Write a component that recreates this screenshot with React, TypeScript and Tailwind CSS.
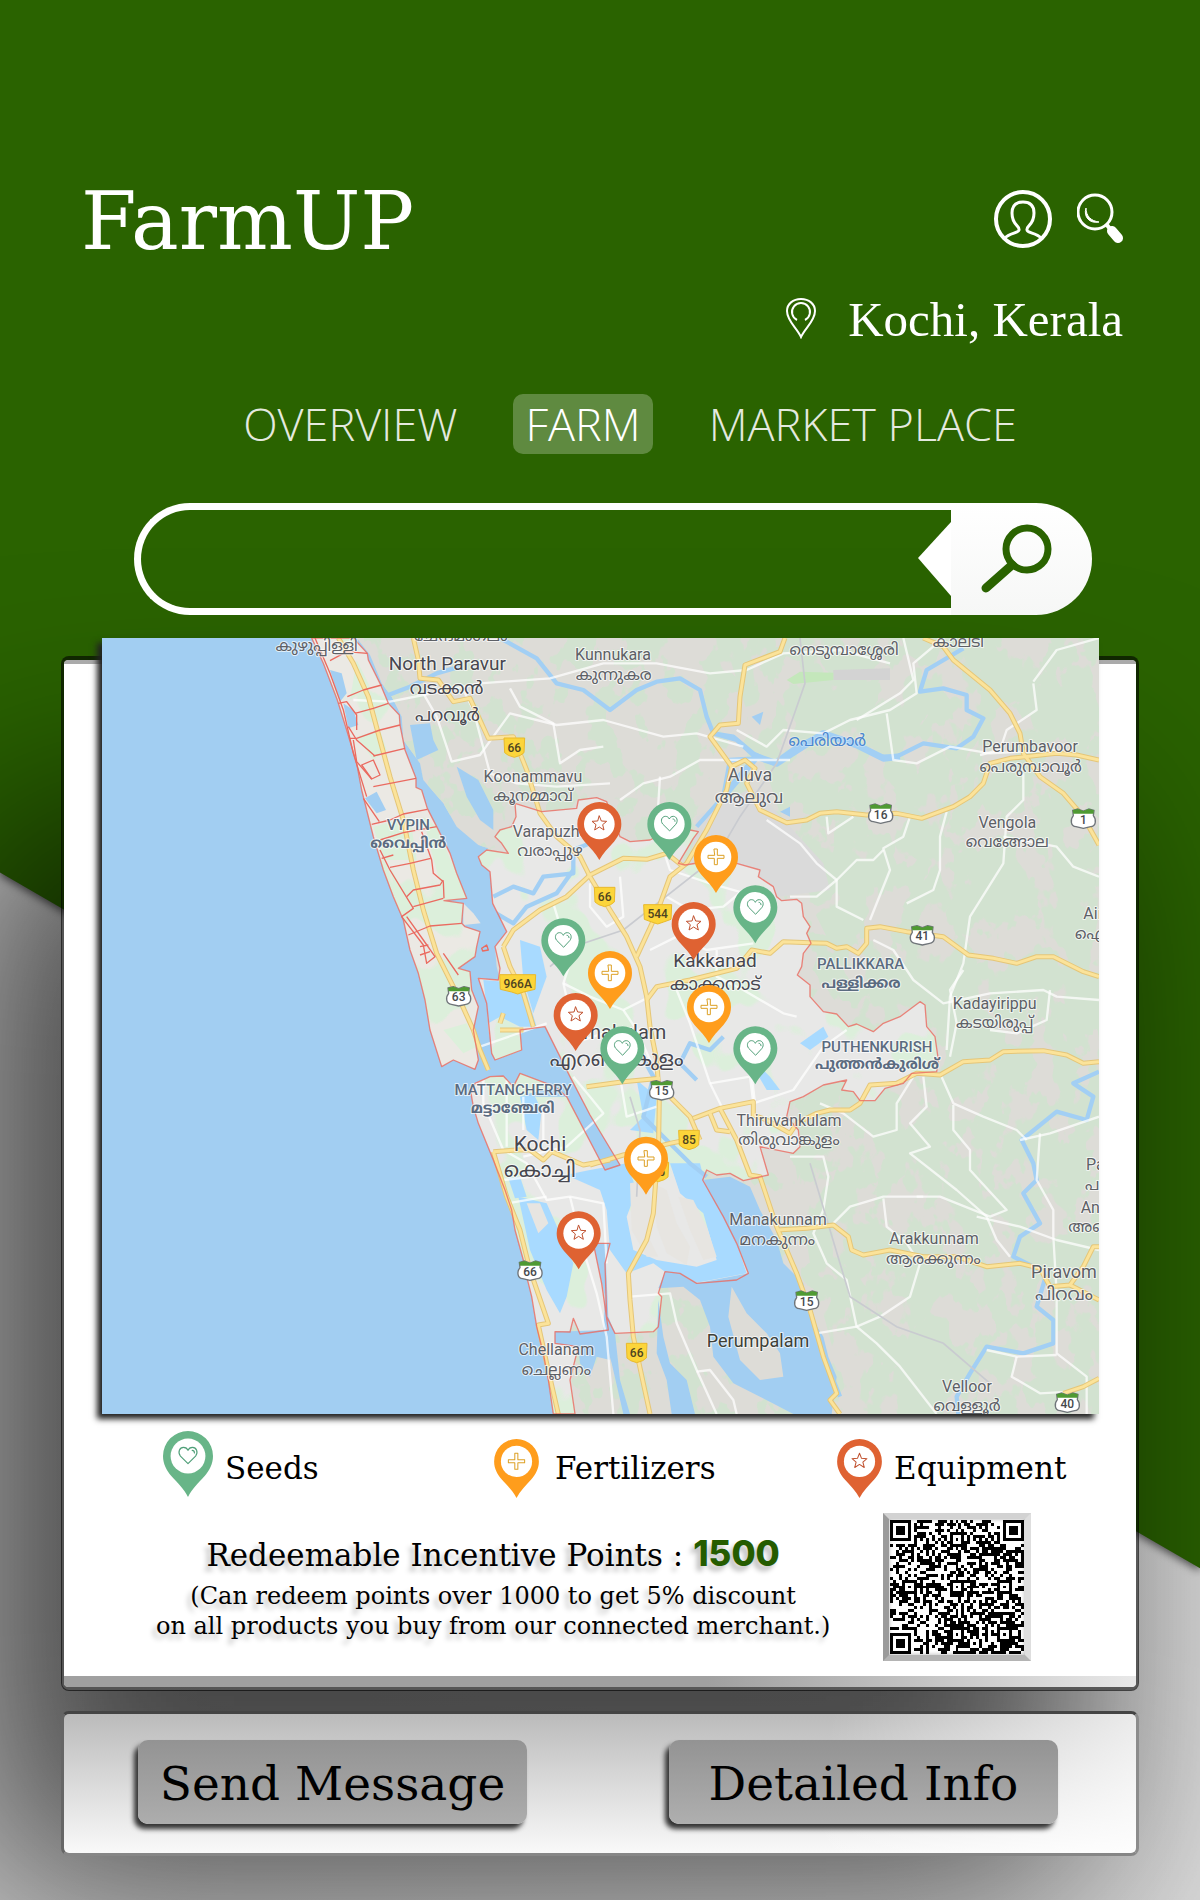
import React from "react";

const SERIF = "font-['DejaVu_Serif',serif]";

type PinKind = "seed" | "fertilizer" | "equipment";

const PIN_COLORS: Record<PinKind, { fill: string; line: string }> = {
  seed: { fill: "#68b588", line: "#4f9f78" },
  fertilizer: { fill: "#ff9d1c", line: "#dda126" },
  equipment: { fill: "#df6232", line: "#c0512f" },
};

/* Marker with its head centred on 66,66 and its tip at 66,172. */
function PinShape({ kind }: { kind: PinKind }) {
  const c = PIN_COLORS[kind];
  return (
    <g>
      <path d="M66 0A66 66 0 0 0 0 66C0 88 10 104 22 119C40 139 55 153 66 174C77 153 92 139 110 119C122 104 132 88 132 66A66 66 0 0 0 66 0Z" fill={c.fill} />
      <circle cx="66" cy="66" r="46" fill="#fff" />
      <g fill="none" stroke={c.line} strokeWidth="3" strokeLinejoin="round" strokeLinecap="round">
        {kind === "seed" && (
          <>
            <path d="M66 86L46 66C38 56 44 43 54 43C60 43 64 46 66 51C68 46 72 43 78 43C88 43 94 56 86 66Z" />
            <path d="M77 51C81 51 83 54 83 58" />
          </>
        )}
        {kind === "fertilizer" && <path d="M61 42H70V61H90V70H70V89H61V70H42V61H61Z" />}
        {kind === "equipment" && <path d="M66 42L72 57L88 58L76 68L80 84L66 75L52 84L56 68L44 58L60 57Z" />}
      </g>
    </g>
  );
}

function Pin({ kind, className }: { kind: PinKind; className: string }) {
  return (
    <svg viewBox="0 0 132 174" className={className} aria-hidden="true">
      <PinShape kind={kind} />
    </svg>
  );
}

const PINS: [PinKind, number, number][] = [
  ["equipment", 1528, 582],
  ["seed", 1738, 582],
  ["fertilizer", 1878, 681],
  ["seed", 1996, 832],
  ["equipment", 1811, 882],
  ["seed", 1420, 931],
  ["fertilizer", 1560, 1029],
  ["fertilizer", 1857, 1131],
  ["equipment", 1457, 1155],
  ["seed", 1597, 1255],
  ["seed", 1996, 1255],
  ["fertilizer", 1668, 1586],
  ["equipment", 1466, 1810],
];

type Label = { t: string; x: number; y: number; s?: number; c?: string; w?: number; a?: "start" | "end" };

const SLATE = "#5b6b80";
const DARK = "#47474f";

const LABELS: Label[] = [
  { t: "കുഴുപ്പിള്ളി", x: 680, y: 62 },
  { t: "ചേന്ദമംഗലം", x: 1112, y: 32 },
  { t: "North Paravur", x: 1072, y: 121, s: 57, c: DARK },
  { t: "വടക്കൻ", x: 1070, y: 192, s: 54, c: DARK },
  { t: "പറവൂർ", x: 1072, y: 273, s: 54, c: DARK },
  { t: "Kunnukara", x: 1569, y: 89 },
  { t: "കുന്നുകര", x: 1571, y: 149 },
  { t: "നെടുമ്പാശ്ശേരി", x: 2262, y: 74 },
  { t: "കാലടി", x: 2605, y: 50 },
  { t: "Perumbavoor", x: 2820, y: 366 },
  { t: "പെരുമ്പാവൂർ", x: 2822, y: 425 },
  { t: "Aluva", x: 1980, y: 453, s: 54 },
  { t: "ആലുവ", x: 1977, y: 518, s: 54 },
  { t: "Koonammavu", x: 1329, y: 456 },
  { t: "കൂനമ്മാവ്", x: 1329, y: 514 },
  { t: "Varapuzha", x: 1268, y: 620, a: "start" },
  { t: "വരാപ്പുഴ", x: 1380, y: 679 },
  { t: "VYPIN", x: 955, y: 600, s: 45, c: SLATE, w: 500 },
  { t: "വൈപ്പിൻ", x: 955, y: 655, s: 45, c: SLATE, w: 700 },
  { t: "Vengola", x: 2752, y: 595 },
  { t: "വെങ്ങോല", x: 2752, y: 652 },
  { t: "PALLIKKARA", x: 2312, y: 1018, s: 45, c: SLATE, w: 500 },
  { t: "പള്ളിക്കര", x: 2313, y: 1074, s: 45, c: SLATE, w: 700 },
  { t: "Kakkanad", x: 1875, y: 1011, s: 57, c: DARK },
  { t: "കാക്കനാട്", x: 1876, y: 1080, s: 54, c: DARK },
  { t: "Kadayirippu", x: 2714, y: 1136 },
  { t: "കടയിരുപ്പ്", x: 2714, y: 1195 },
  { t: "Airapuram", x: 2980, y: 868, a: "start" },
  { t: "ഐരാപുരം", x: 2955, y: 928, a: "start" },
  { t: "Ernakulam", x: 1729, y: 1228, s: 60, c: DARK, a: "end" },
  { t: "എറണാകുളം", x: 1580, y: 1309, s: 63, c: DARK },
  { t: "MATTANCHERRY", x: 1269, y: 1396, s: 45, c: SLATE, w: 500 },
  { t: "മട്ടാഞ്ചേരി", x: 1268, y: 1450, s: 45, c: SLATE, w: 700 },
  { t: "Kochi", x: 1350, y: 1562, s: 63, c: DARK },
  { t: "കൊച്ചി", x: 1350, y: 1641, s: 63, c: DARK },
  { t: "Chellanam", x: 1399, y: 2174 },
  { t: "ചെല്ലണം", x: 1399, y: 2234 },
  { t: "PUTHENKURISH", x: 2361, y: 1265, s: 45, c: SLATE, w: 500 },
  { t: "പുത്തൻകുരിശ്", x: 2361, y: 1318, s: 45, c: SLATE, w: 700 },
  { t: "Thiruvankulam", x: 2097, y: 1487 },
  { t: "തിരുവാങ്കുളം", x: 2097, y: 1545 },
  { t: "Manakunnam", x: 2064, y: 1786 },
  { t: "മനകുന്നം", x: 2062, y: 1845 },
  { t: "Arakkunnam", x: 2532, y: 1843 },
  { t: "ആരക്കുന്നം", x: 2530, y: 1902 },
  { t: "Piravom", x: 2922, y: 1944, s: 54 },
  { t: "പിറവം", x: 2922, y: 2009, s: 54 },
  { t: "Pampakuda", x: 2988, y: 1621, a: "start" },
  { t: "പാമ്പാക്കുട", x: 2985, y: 1680, a: "start" },
  { t: "Anchalpetty", x: 2972, y: 1748, a: "start" },
  { t: "അഞ്ചൽപെട്ടി", x: 2935, y: 1806, a: "start" },
  { t: "Perumpalam", x: 2004, y: 2150, s: 54, c: "#3d4038" },
  { t: "Velloor", x: 2631, y: 2287 },
  { t: "വെള്ളൂർ", x: 2631, y: 2342 },
];

const YELLOW_SHIELDS: [string, number, number][] = [
  ["66", 1273, 352],
  ["66", 1544, 800],
  ["544", 1703, 852],
  ["966A", 1283, 1062],
  ["85", 1797, 1529],
  ["85", 1705, 1625],
  ["66", 1640, 2168],
];

const WHITE_SHIELDS: [string, number, number][] = [
  ["63", 1106, 1098],
  ["66", 1320, 1921],
  ["16", 2372, 550],
  ["1", 2980, 565],
  ["41", 2497, 915],
  ["15", 1715, 1380],
  ["15", 2150, 2011],
  ["40", 2932, 2317],
];

const VYPIN =
  "M665 24L700 100L742 210L770 300L800 400L815 480L830 540L850 620L880 720L910 800L940 870L960 960L985 1030L1005 1110L1020 1200L1055 1310L1090 1290L1155 1318L1165 1290L1150 1200L1165 1130L1145 1080L1140 1025L1105 1015L1155 980L1160 950L1170 905L1125 890L1115 880L1120 820L1062 812L1130 805L1100 730L1080 670L1040 590L1012 535L995 480L978 472L978 445L945 360L930 285L928 255L895 220L870 160L835 90L832 70L790 24Z";

const MAINLAND =
  "M800 24L840 75L875 160L905 200L935 260L940 330L990 400L1000 450L1060 520L1100 590L1165 645L1195 655L1165 680L1175 705L1200 725L1208 820L1250 905L1215 950L1220 1010L1230 1050L1165 1045L1190 1120L1195 1200L1215 1290L1295 1260L1290 1200L1365 1190L1440 1340L1500 1455L1590 1605L1560 1635L1450 1610L1420 1570L1370 1520L1330 1440L1300 1400L1240 1338L1200 1340L1155 1360L1143 1390L1150 1430L1165 1480L1210 1590L1245 1680L1265 1740L1275 1800L1300 1890L1310 1940L1325 2000L1340 2090L1360 2170L1375 2250L1390 2352H3027V24Z";

const CITY =
  "M1275 520L1355 545L1460 535L1465 510L1520 503L1550 515L1590 620L1620 635L1680 630L1738 600L1800 600L1825 605L1810 625L1765 700L1785 705L1880 690L1940 700L2010 720L2005 740L2050 770L2060 800L2075 812L2120 808L2135 820L2140 860L2160 890L2150 910L2163 940L2140 970L2135 1010L2122 1035L2160 1065L2160 1100L2200 1145L2240 1152L2275 1190L2300 1182L2350 1205L2380 1180L2430 1160L2490 1115L2505 1125L2510 1190L2535 1220L2545 1290L2540 1325L2465 1330L2440 1360L2385 1375L2355 1412L2310 1412L2290 1385L2255 1380L2270 1350L2200 1365L2140 1400L2100 1415L2090 1460L2125 1500L2130 1550L2110 1570L2010 1550L2035 1635L1960 1652L1920 1630L1880 1635L1850 1620L1838 1650L1900 1760L1940 1840L1975 1930L1940 1950L1820 1960L1770 1930L1725 1925L1705 1990L1715 2000L1705 2090L1690 2105L1575 2110L1550 2060L1545 1900L1560 1840L1510 1840L1535 1960L1555 2100L1470 2112L1450 2065L1440 2106L1395 2105L1395 2140L1465 2150L1440 2250L1455 2352H1390L1375 2250L1360 2170L1340 2090L1325 2000L1310 1940L1300 1890L1275 1800L1265 1740L1245 1680L1210 1590L1165 1480L1150 1430L1143 1390L1155 1360L1200 1340L1240 1338L1270 1370L1290 1330L1395 1370L1430 1400L1545 1620L1590 1605L1500 1455L1440 1340L1365 1190L1290 1200L1295 1260L1215 1290L1205 1270L1190 1120L1165 1045L1225 1050L1230 1015L1215 950L1250 905L1208 820L1200 725L1175 705L1165 680L1190 660L1255 670L1235 640L1215 620L1230 600L1265 590L1278 560Z";

const OUTER_WATER = [
  "M1838 1650L1920 1640L1980 1670L2010 1740L2060 1830L2080 1900L2140 1960L2150 2040L2200 2120L2215 2180L2240 2240L2225 2352H2110L2010 2300L1930 2260L1870 2180L1860 2090L1830 2010L1780 1970L1705 1975L1725 1925L1770 1930L1820 1960L1975 1930L1940 1840Z",
  "M1705 2010L1720 2120L1740 2200L1790 2250L1815 2352H1745L1730 2250L1700 2170Z",
  "M1510 1840L1560 1840L1548 1900L1555 2060L1575 2110L1590 2250L1620 2352H1600L1565 2200L1540 2110L1545 2000Z",
  "M1395 2105L1550 2100L1560 2190L1520 2180L1500 2240L1470 2200L1465 2150L1395 2140Z",
  "M720 120L755 130L770 190L750 215Z",
  "M760 220L790 240L805 285L775 295Z",
  "M825 505L860 485L888 540L860 550Z",
  "M1100 410L1165 450L1210 540L1210 600L1170 570L1130 500Z",
  "M960 285L1020 280L1030 330L1045 360L980 390Z",
  "M2070 545L2100 530L2100 560Z",
  "M1985 260L2020 245L2010 285Z",
];

const INNER_WATER = [
  "M1500 1620L1610 1600L1640 1680L1610 1760L1630 1860L1700 1890L1820 1910L1880 1890L1840 1750L1770 1690L1740 1600L1830 1600L1845 1660L1900 1760L1940 1840L1970 1930L1820 1958L1770 1930L1725 1925L1690 1900L1610 1930L1560 1860L1550 1740L1530 1680L1440 1640L1400 1640Z",
  "M1285 1700L1370 1720L1410 1810L1450 1900L1430 2000L1410 2050L1370 1980L1320 1860Z",
  "M1255 1645L1290 1640L1310 1700L1275 1705Z",
  "M1290 1400L1330 1390L1355 1440L1345 1530L1310 1500Z",
  "M1180 1050L1300 1060L1340 1190L1290 1190L1230 1160L1195 1180Z",
  "M1290 930L1350 950L1370 1040L1330 1150L1300 1050Z",
  "M1640 1350L1700 1400L1690 1510L1620 1500L1660 1460Z",
  "M1960 1260L2040 1340L2070 1380L2030 1380Z",
  "M2130 1240L2200 1190L2215 1220L2160 1260Z",
];

const ISLANDS = [
  "M1620 1660L1670 1650L1695 1750L1680 1830L1705 1880L1670 1880L1625 1800Z",
  "M1690 1660L1730 1680L1760 1780L1800 1850L1790 1905L1730 1870L1700 1790Z",
  "M1765 1700L1810 1710L1850 1790L1880 1880L1840 1890L1800 1800Z",
  "M1310 1720L1350 1720L1375 1780L1345 1810Z",
  "M1120 820L1150 850L1172 880L1120 885Z",
];

const RIVERS = [
  "M1230 24L1340 85L1400 160L1480 180L1560 240L1640 180L1700 155L1770 145L1830 180L1850 260L1870 310L1930 320L1990 370L2050 400L2120 350L2200 310L2300 340L2370 380L2420 380L2500 340L2600 355L2650 320L2680 265L2630 240L2630 195L2560 175L2490 185L2510 120L2620 55",
  "M1870 310L1940 330L2000 385L1920 390L1900 500L1820 590",
  "M895 195L960 170L1040 130L1110 110",
  "M3027 1325L2950 1360L3010 1400L2990 1470L2900 1445L2795 1530L2830 1600L2840 1650L2800 1690L2850 1780L2790 1820L2770 1880L2870 1930L2840 2030L2890 2070L2890 2140L2800 2170L2690 2150L2640 2230L2600 2300L2605 2352",
  "M1210 800L1270 770L1330 790L1360 740L1450 730L1450 660L1500 640",
  "M1210 845L1270 880L1310 830L1400 790L1450 720",
  "M2170 2110L2210 2200L2250 2300",
  "M1640 1250L1690 1340L1660 1460L1720 1520L1800 1600L1850 1640",
  "M1900 1220L1860 1260L1800 1240L1770 1300L1820 1350",
];

const WHITE_ROADS = [
  "M790 210L900 215L1000 195L1170 160L1380 145L1540 100L1700 100L1860 130L1970 120L2080 70L2250 60L2400 100",
  "M1000 190L1040 260L1085 395L1170 375L1260 250L1400 285L1540 270L1720 320L1820 310L1960 350",
  "M1260 175L1290 230L1390 280L1410 400L1470 360L1540 350",
  "M1110 160L1150 240L1200 430L1280 460L1400 470L1560 460",
  "M1590 510L1660 460L1740 440L1830 390L2100 390",
  "M1710 440L1700 600L1740 720L1860 760L2000 800",
  "M1940 300L2030 350L2080 300L2200 310L2280 270L2400 240L2480 190L2470 100L2560 24",
  "M2390 250L2410 390L2480 400L2580 350L2700 370L2900 360",
  "M2800 430L2800 510L2750 560L2740 700L2640 860L2620 1000L2580 1100L2570 1260",
  "M2830 160L2840 240L2750 300L2730 360L2670 375",
  "M2440 24L2470 150L2430 190L2300 270",
  "M2830 155L2900 60L3027 24",
  "M2210 560L2215 610L2290 560",
  "M2460 560L2440 620L2380 655L2400 720L2340 870",
  "M2570 545L2550 620L2550 720L2530 780L2450 820",
  "M2380 660L2350 690L2300 690L2240 750L2180 800L2100 800",
  "M2030 570L2130 640L2180 700L2240 750L2240 830L2320 870",
  "M2350 930L2410 960L2470 1050L2560 1120L2700 1090L2860 1080L2900 1100L3027 1110",
  "M2620 1020L2580 1080L2600 1180L2580 1280",
  "M2880 1080L2870 1170L2780 1210L2700 1200",
  "M2740 620L2900 650L2950 710L3027 740",
  "M2470 1340L2420 1420L2420 1500L2350 1520L2260 1450L2190 1420",
  "M2550 1330L2590 1420L2680 1460L2780 1500L2810 1530",
  "M2590 1425L2590 1500L2640 1560L2640 1620L2750 1740L2700 1760L2550 1700L2480 1700",
  "M2500 1340L2510 1430L2460 1480L2520 1550L2460 1570L2600 1680L2690 1760L2720 1830L2760 1880",
  "M2790 1530L2880 1510L3027 1460",
  "M2850 1510L2840 1650L2890 1740L2890 1820L2900 1990L2900 2080L2900 2170L2990 2240L2990 2352",
  "M2660 1760L2790 1790L2900 1830L3027 1860",
  "M2230 1780L2280 1730L2380 1700L2500 1700",
  "M2380 1705L2390 1790L2450 1840L2490 1900L2460 2000L2370 2060L2300 2090",
  "M2100 1580L2200 1580L2215 1640L2200 1740L2170 1810L2210 1900L2270 1950L2300 2090L2360 2140L2430 2210L2540 2352",
  "M2180 2110L2300 2090",
  "M2690 2160L2780 2180L2900 2175",
  "M2780 2180L2765 2240L2850 2290L2940 2285",
  "M1390 820L1420 920L1440 1000L1420 1060L1450 1190",
  "M1500 760L1500 830L1550 890L1600 860L1590 740",
  "M1420 1060L1500 1100L1600 1140L1680 1100",
  "M1600 1140L1640 1200L1680 1290",
  "M1730 800L1800 840L1900 830L1960 780L2000 800",
  "M1680 960L1760 920L1850 960L1990 940",
  "M1880 960L1880 1040L1960 1080L2080 1150L2120 1160",
  "M1760 1080L1800 1180L1860 1360L1900 1440",
  "M1860 1360L1980 1340L1990 1420L2110 1380L2200 1250L2270 1200",
  "M1980 1290L1995 1420",
  "M1590 1340L1610 1460L1700 1430",
  "M1450 1340L1500 1400L1540 1450L1430 1550L1300 1580",
  "M1180 1350L1180 1420L1240 1560L1310 1600L1370 1710L1440 1700L1540 1720L1550 1900",
  "M1250 1350L1250 1550M1300 1400L1300 1500M1360 1440L1360 1540",
  "M1240 1650L1330 1640M1265 1718L1370 1700",
  "M1440 1700L1480 1860L1520 1990L1550 2120L1570 2352",
  "M1620 2000L1740 1990L1760 2080L1820 2220L1880 2352",
  "M1820 2225L1860 2220L1930 2310L1940 2352",
  "M1170 1250L1370 1180M1450 1240L1600 1190",
];

const YELLOW_ROADS = [
  "M745 24L790 100L835 200L870 330L900 440L940 570L970 720L1000 840L1040 970L1100 1090L1150 1200L1170 1260L1195 1320",
  "M970 24L985 90L990 145L1045 150L1090 215L1140 205L1195 325L1270 320L1310 420L1350 550L1400 620L1470 680L1500 740L1560 840L1610 920L1650 1010L1670 1100L1680 1190L1700 1290L1708 1400L1706 1530L1690 1750L1670 1830L1615 1930L1620 2010L1630 2120L1660 2260L1680 2352",
  "M2085 24L2070 65L1965 105L1950 200L1945 280L1890 285L1860 320L1925 410L1910 480L1850 600L1790 700L1740 740L1700 850L1640 980",
  "M1925 410L1965 390L1995 415L1970 460L2010 540L2090 578L2150 570L2190 550L2240 545L2330 555L2420 550L2495 565L2590 530L2640 500L2680 460L2700 400L2760 385L2900 370L2960 375L3027 390",
  "M2500 24L2560 50L2590 90L2700 180L2760 250L2790 310L2800 370L2850 440L2920 490L2980 560L3027 645",
  "M1230 1200L1300 1200",
  "M1230 1180L1240 1150",
  "M1240 950L1270 900L1350 840L1430 800L1500 735L1600 685L1670 688L1730 670L1780 710",
  "M1240 950L1260 1010L1300 1090L1330 1190",
  "M1670 1110L1700 1070L1800 1050L1940 1015L1985 960L2040 970L2080 935L2160 938L2210 940L2240 955L2270 950L2305 970L2330 940L2330 895L2370 890L2450 905L2560 920L2635 975L2710 985L2780 1000L2840 980L2890 980L2980 1025L3027 1040",
  "M1490 1370L1600 1355L1710 1345",
  "M1740 1400L1800 1460L1830 1530M1810 1465L1890 1435L1990 1415L1990 1460M1890 1435L1940 1530L1980 1635L2010 1640L2060 1790L2120 1930L2160 2040L2200 2180L2240 2290L2220 2310L2250 2352",
  "M1860 1450L1880 1500L1920 1505",
  "M1500 1605L1600 1575L1740 1540L1790 1530",
  "M1210 1565L1280 1560L1320 1560L1360 1590L1385 1565L1480 1605L1560 1590",
  "M1210 1565L1250 1700L1290 1800L1320 1920L1375 2080L1345 2085L1370 2200L1405 2352",
  "M1990 1455L2030 1470L2100 1510L2120 1480L2180 1450L2220 1440L2280 1440L2310 1420L2340 1365L2420 1360L2480 1330L2550 1335L2620 1295L2700 1290L2740 1265L2860 1262L2930 1275L2980 1300L3027 1295",
  "M2060 1800L2150 1795L2230 1785L2275 1820L2285 1860L2320 1875L2400 1860L2500 1880L2600 1880L2690 1910L2790 1900L2850 1915L2880 1970L2940 1965L2980 1910L3010 1850L3027 1850",
  "M2940 1965L3027 2010",
  "M2920 2290L2980 2270L3027 2245",
];

const RED_LINES = [
  "M720 92L770 65L832 70M772 200L820 180L875 165M795 250L850 235L895 220M780 325L800 325L870 300L930 285M850 378L945 355M815 405L850 390L870 435L845 447ZM850 470L978 445M845 583L900 570L940 552L1012 538M870 630L940 608L1040 590M900 712L960 700L1022 685M950 800L970 780L1050 765L1060 750M970 830L1060 805M955 915L1020 888L1115 880",
  "M775 290L800 330L855 378M790 330L800 395L845 447M820 505L868 575M870 660L900 720L970 835L935 860L1000 945L1010 1000L1035 980L1000 930L950 860M745 220L770 215L800 255L800 300",
  "M995 605L1025 690L1030 730L1060 755L1062 805M875 685L910 675M990 950L1015 945M990 975L1020 965M1060 970L1105 1035",
  "M1175 955L1190 945L1195 960L1178 963Z",
  "M675 24L720 130L760 240L790 370L830 500",
];

function RouteShields() {
  return (
    <g fontFamily="Roboto, sans-serif" fontWeight="500" fontSize="36" textAnchor="middle">
      {YELLOW_SHIELDS.map(([t, x, y], i) => {
        const half = t.length > 3 ? 54 : t.length > 2 ? 42 : 31;
        return (
          <g key={i} transform={`translate(${x} ${y})`}>
            <path d={`M${-half} -28H${half}L${half - 2} 16L18 24L0 30L-18 24L${2 - half} 16Z`} fill="#fcd53a" stroke="#e9b92c" strokeWidth="3" strokeLinejoin="round" />
            <text y="13" fill="#4e4420">{t}</text>
          </g>
        );
      })}
      {WHITE_SHIELDS.map(([t, x, y], i) => (
        <g key={i} transform={`translate(${x} ${y})`}>
          <path d="M-32 -24L-16 -28L0 -22L16 -28L32 -24L30 -8C40 4 38 24 22 25L0 30L-22 25C-38 24 -40 4 -30 -8Z" fill="#fff" stroke="#70757a" strokeWidth="4" strokeLinejoin="round" />
          <path d="M-32 -24L-16 -28L0 -22L16 -28L32 -24L30 -14H-30Z" fill="#4f9a33" />
          <text y="16" fontSize="36" fill="#45484c">{t}</text>
        </g>
      ))}
    </g>
  );
}

function FarmMap() {
  return (
    <svg viewBox="36 24 2991 2328" className="block h-auto w-full" role="img" aria-label="Map of farms around Kochi">
      <defs>
        <clipPath id="land"><path d={MAINLAND} /></clipPath>
        <clipPath id="east"><path d="M1900 24H3027V2352H2280L2160 1900L2100 1500L2300 1100L2150 800Z" /></clipPath>
        <clipPath id="city"><path d={CITY} /></clipPath>
        <clipPath id="vypin"><path d={VYPIN} /></clipPath>
        <filter id="woods" x="0%" y="0%" width="100%" height="100%" colorInterpolationFilters="sRGB">
          <feTurbulence type="fractalNoise" baseFrequency="0.012 0.009" numOctaves="4" seed="8" />
          <feColorMatrix values="0 0 0 0 0.824  0 0 0 0 0.886  0 0 0 0 0.816  30 0 0 0 -15.6" />
        </filter>
        <filter id="groves" x="0%" y="0%" width="100%" height="100%" colorInterpolationFilters="sRGB">
          <feTurbulence type="fractalNoise" baseFrequency="0.009 0.006" numOctaves="4" seed="21" />
          <feColorMatrix values="0 0 0 0 0.824  0 0 0 0 0.886  0 0 0 0 0.816  30 0 0 0 -14.2" />
        </filter>
        <filter id="parks" x="0%" y="0%" width="100%" height="100%" colorInterpolationFilters="sRGB">
          <feTurbulence type="fractalNoise" baseFrequency="0.005 0.004" numOctaves="3" seed="5" />
          <feColorMatrix values="0 0 0 0 0.863  0 0 0 0 0.937  0 0 0 0 0.859  30 0 0 0 -16" />
        </filter>
      </defs>
      <rect x="36" y="24" width="2991" height="2328" fill="#a2cef2" />
      <path d={MAINLAND} fill="#dddcd7" />
      <g clipPath="url(#land)">
        <rect x="800" y="24" width="2227" height="2328" filter="url(#woods)" />
        <g clipPath="url(#east)">
          <rect x="1900" y="24" width="1127" height="2328" filter="url(#groves)" />
        </g>
      </g>
      <path d="M1820 560L1990 470L2100 590L2200 700L2220 780L2060 800L1980 710L1800 700Z" fill="#dadada" />
      <path d="M2230 120L2400 115L2400 150L2230 150Z" fill="#d3d3d3" />
      <path d="M2090 150L2130 125L2230 128L2230 150L2110 162Z" fill="#c4e7bb" />
      <path d={CITY} fill="#e8e8e7" />
      <path d={VYPIN} fill="#ebe9e4" />
      <g clipPath="url(#city)"><rect x="1140" y="500" width="1420" height="1860" filter="url(#parks)" /></g>
      <g clipPath="url(#vypin)">
        <rect x="660" y="24" width="520" height="1310" filter="url(#parks)" />
        <path d="M800 90L840 170L780 210ZM800 320L870 300L890 360L850 390ZM850 590L960 560L980 690L880 690ZM900 710L950 800L965 830L920 820ZM1000 560L1040 590L1130 805L1062 800L1020 650ZM1060 1200L1130 1180L1160 1250L1120 1270Z" fill="#dcf0db" />
      </g>
      <g fill="#a2cef2">{OUTER_WATER.map((d) => <path key={d} d={d} />)}</g>
      <g fill="#a8daff">{INNER_WATER.map((d) => <path key={d} d={d} />)}</g>
      <path d="M1300 1395L1345 1400L1440 1400L1545 1620L1590 1605L1500 1455L1440 1340L1370 1200L1340 1260L1400 1370Z" fill="#a2cef2" />
      <g fill="#e7e5e1">{ISLANDS.map((d) => <path key={d} d={d} />)}</g>
      <path d="M1925 1970L1970 2050L2030 2110L2070 2170L2080 2240L2010 2250L1950 2190L1915 2060Z" fill="#dddcd7" />
      <g fill="none" stroke="#a2cff4" strokeWidth="13" strokeLinejoin="round">{RIVERS.map((d) => <path key={d} d={d} />)}</g>
      <path d="M1900 500L2000 380L2060 400L2200 310L2300 345L2380 385L2430 380" fill="none" stroke="#a2cff4" strokeWidth="20" strokeLinejoin="round" />
      <g fill="none" stroke="#fff" strokeOpacity=".72" strokeWidth="7" strokeLinejoin="round">{WHITE_ROADS.map((d) => <path key={d} d={d} />)}</g>
      <path d="M2130 24L2145 160L2110 260L2060 400L1950 560L1880 680L1600 900L1450 950L1380 1010M1620 1400L1650 1500L1640 1700M2160 1600L2220 1800L2280 2000L2420 2090L2560 2140L2700 2260" fill="none" stroke="#c9cbd0" strokeWidth="5" />
      <g fill="none" stroke="#e5c678" strokeWidth="15" strokeLinejoin="round">{YELLOW_ROADS.map((d) => <path key={d} d={d} />)}</g>
      <g fill="none" stroke="#fbe39a" strokeWidth="9" strokeLinejoin="round">{YELLOW_ROADS.map((d) => <path key={d} d={d} />)}</g>
      <g fill="none" stroke="#ea6a60" strokeWidth="4" strokeLinejoin="round">
        <path d={CITY} strokeOpacity=".8" />
        <path d={VYPIN} strokeOpacity=".8" />
        {RED_LINES.map((d) => <path key={d} d={d} />)}
      </g>
      <RouteShields />
      <g fontFamily="Roboto, 'Noto Sans Malayalam', 'Noto Sans', sans-serif" stroke="#fff" strokeOpacity=".7" strokeWidth="6" strokeLinejoin="round" paintOrder="stroke">
        {LABELS.map((l) => (
          <text key={l.t} x={l.x} y={l.y} fontSize={l.s ?? 48} fill={l.c ?? "#5d6066"} fontWeight={l.w ?? 400} textAnchor={l.a ?? "middle"}>
            {l.t}
          </text>
        ))}
        <text x="2212" y="348" fontSize="48" fill="#4a86d0" textAnchor="middle" strokeOpacity=".3">പെരിയാർ</text>
      </g>
      {PINS.map(([kind, x, y]) => (
        <g key={`${x}-${y}`} transform={`translate(${x - 66} ${y - 66})`}>
          <PinShape kind={kind} />
        </g>
      ))}
    </svg>
  );
}

/* 45 x 45 modules: finders, timing tracks, alignment marks and data cells. */
function qrPath(): string {
  const n = 45;
  const centres: [number, number][] = [[22, 6], [6, 22], [22, 22], [38, 22], [22, 38], [38, 38]];
  let seed = 20211;
  let d = "";
  for (let y = 0; y < n; y++) {
    for (let x = 0; x < n; x++) {
      seed = (seed * 1103515245 + 12345) % 2147483648;
      let on = seed / 2147483648 < 0.52;
      if (x === 6 || y === 6) on = (x + y) % 2 === 0;
      for (const [cx, cy] of centres) {
        const r = Math.max(Math.abs(x - cx), Math.abs(y - cy));
        if (r <= 2) on = r !== 1;
      }
      for (const [cx, cy] of [[3, 3], [n - 4, 3], [3, n - 4]]) {
        const r = Math.max(Math.abs(x - cx), Math.abs(y - cy));
        if (r <= 4) on = r !== 2 && r !== 4;
      }
      if (on) d += `M${x} ${y}h1v1h-1z`;
    }
  }
  return d;
}

const QR = qrPath();

function QrCode() {
  return (
    <div className="size-[148px] shrink-0 border-[6px] border-t-[#d2d2d2] border-r-[#dedede] border-b-[#b4b4b4] border-l-[#9a9a9a] bg-white shadow-[inset_0_0_4px_#aaa]">
      <svg viewBox="0 0 45 45" shapeRendering="crispEdges" className="size-full p-px" role="img" aria-label="QR code">
        <path d={QR} fill="#000" />
      </svg>
    </div>
  );
}

function Header() {
  return (
    <header className="text-white">
      <div className="flex items-center justify-between pr-[14px] pl-5">
        <h1 className={`${SERIF} text-[80px] leading-[80px]`}>FarmUP</h1>
        <div className="flex items-center gap-6 pb-1.5">
          <button type="button" aria-label="Profile">
            <svg viewBox="0 0 60 60" className="size-[60px]" fill="none" stroke="#fff" strokeWidth="4">
              <circle cx="30" cy="30" r="27" />
              <path d="M12 49C16 44 26 44 26 41C27 36 19 37 19 24C19 16 23 13 30 13C37 13 41 16 41 24C41 37 33 36 34 41C34 44 44 44 48 49" strokeWidth="3" />
            </svg>
          </button>
          <button type="button" aria-label="Search">
            <svg viewBox="0 0 48 52" className="h-[52px] w-12" fill="none" stroke="#fff">
              <circle cx="18" cy="19" r="17" strokeWidth="3" />
              <path d="M30 32L33 36" strokeWidth="4" />
              <path d="M35 38L41 45" strokeWidth="10" strokeLinecap="round" />
              <path d="M9 15C6 24 13 31 22 29C14 28 9 23 9 15Z" fill="#fff" strokeWidth="1" />
            </svg>
          </button>
        </div>
      </div>
      <div className="mt-[30px] flex items-center justify-end gap-[31px] pr-4">
        <svg viewBox="0 0 32 42" className="mb-1 h-[42px] w-8" fill="none" stroke="#fff" strokeWidth="2" aria-hidden="true">
          <path d="M16 40C12 31 2 24 2 14C2 7 8 2 16 2C24 2 30 7 30 14C30 24 20 31 16 40Z" />
          <path d="M12 23A9 9 0 1 1 20 23" />
        </svg>
        <p className="font-['Liberation_Serif',serif] text-[49px] leading-[56px]">Kochi, Kerala</p>
      </div>
      <nav className="mt-[46px] flex items-center justify-center gap-14 pl-[60px] font-['Open_Sans',sans-serif] text-[45px] leading-[60px] font-light text-[#e4e9df]">
        <a href="#overview">OVERVIEW</a>
        <a href="#farm" className="rounded-[10px] bg-white/25 px-3 text-white" aria-current="page">FARM</a>
        <a href="#market">MARKET PLACE</a>
      </nav>
      <form className="mt-[49px] mr-[47px] ml-[73px] flex h-[112px]" onSubmit={(e) => e.preventDefault()}>
        <input
          type="search"
          aria-label="Search farms"
          className="min-w-0 flex-1 rounded-l-[56px] border-[7px] border-r-0 border-white bg-transparent px-10 text-3xl outline-none"
        />
        <button type="submit" aria-label="Submit search" className="relative w-[141px] rounded-r-[56px] bg-linear-to-b from-white to-[#f6f7f6]">
          <svg viewBox="0 0 33 74" className="absolute top-[19px] right-full h-[74px] w-[33px]" aria-hidden="true">
            <path d="M33 0L0 36L33 74Z" fill="#fff" />
          </svg>
          <svg viewBox="0 0 76 76" className="ml-7 size-[76px]" fill="none" stroke="#2a6300" aria-hidden="true">
            <circle cx="48" cy="28" r="21" strokeWidth="7" />
            <path d="M33 44L7 67" strokeWidth="9" strokeLinecap="round" />
          </svg>
        </button>
      </form>
    </header>
  );
}

export default function App() {
  return (
    <div className="relative isolate min-h-screen overflow-hidden bg-linear-to-r from-[#d4d4d4] to-[#dedede] px-[61px] pt-[182px] pb-[45px] text-black">
      <div className="absolute inset-0 -z-10 drop-shadow-[0_3px_4px_rgba(0,0,0,0.6)]">
        <div className="size-full bg-[#2a6300] [clip-path:polygon(0_0,100%_0,100%_82.5%,0_45.9%)]" />
      </div>

      <Header />

      <main>
        <section className="relative -z-[5] mt-[41px] rounded-lg border-x-[3px] border-y-4 border-black/60 bg-white bg-clip-padding shadow-[-70px_180px_220px_25px_rgba(0,0,0,0.68)]">
          <div className="h-1 rounded-t bg-[#aaaaaa]" />
          <div className="-mt-[26px] mr-[37px] ml-[38px] shadow-[-5px_5px_6px_#222]">
            <FarmMap />
          </div>
          <ul className={`${SERIF} grid grid-cols-[331fr_343fr_237fr] pt-[17px] pr-[62px] pl-[99px] text-[31px] leading-[73px]`}>
            <li className="flex items-center gap-3">
              <Pin kind="seed" className="mb-2 h-[66px] w-[50px]" />
              Seeds
            </li>
            <li className="flex items-center gap-4">
              <Pin kind="fertilizer" className="h-[59px] w-[45px]" />
              Fertilizers
            </li>
            <li className="flex items-center gap-3">
              <Pin kind="equipment" className="h-[59px] w-[45px]" />
              Equipment
            </li>
          </ul>
          <div className="flex justify-between pt-2 pr-[105px] pl-[92px]">
            <div className={`${SERIF} pt-5 text-center text-[24px] leading-[30px] whitespace-nowrap [text-shadow:-4px_5px_5px_rgba(0,0,0,0.25)]`}>
              <p className="mb-1.5 text-[31px] leading-10">
                Redeemable Incentive Points :{" "}
                <strong className="font-['Inter',sans-serif] font-extrabold text-[#255c00] text-[35px]">1500</strong>
              </p>
              <p>
                (Can redeem points over 1000 to get 5% discount
                <br />
                on all products you buy from our connected merchant.)
              </p>
            </div>
            <QrCode />
          </div>
          <div className="mt-[15px] h-[11px] rounded-b bg-linear-to-r from-[#a0a0a0] from-60% to-[#e8e8e8]" />
        </section>

        <section className="mt-5 flex justify-between rounded-lg border-[3px] border-t-[#444] border-r-[#8c8c8c] border-b-[#868686] border-l-[#666] bg-[linear-gradient(100deg,transparent_70%,rgba(255,255,255,0.75)),linear-gradient(180deg,#bbbbbb,#f9f9f9)] pt-[26px] pr-[78px] pb-[29px] pl-[74px]">
          <button type="button" className={`${SERIF} h-[84px] w-[389px] rounded-[10px] bg-linear-to-b from-[#939393] to-[#adadad] pt-1 text-[47px] leading-[80px] whitespace-nowrap shadow-[-4px_5px_5px_#333]`}>
            Send Message
          </button>
          <button type="button" className={`${SERIF} h-[84px] w-[389px] rounded-[10px] bg-linear-to-b from-[#939393] to-[#afafaf] pt-1 text-[47px] leading-[80px] whitespace-nowrap shadow-[-4px_5px_5px_#333]`}>
            Detailed Info
          </button>
        </section>
      </main>
    </div>
  );
}
